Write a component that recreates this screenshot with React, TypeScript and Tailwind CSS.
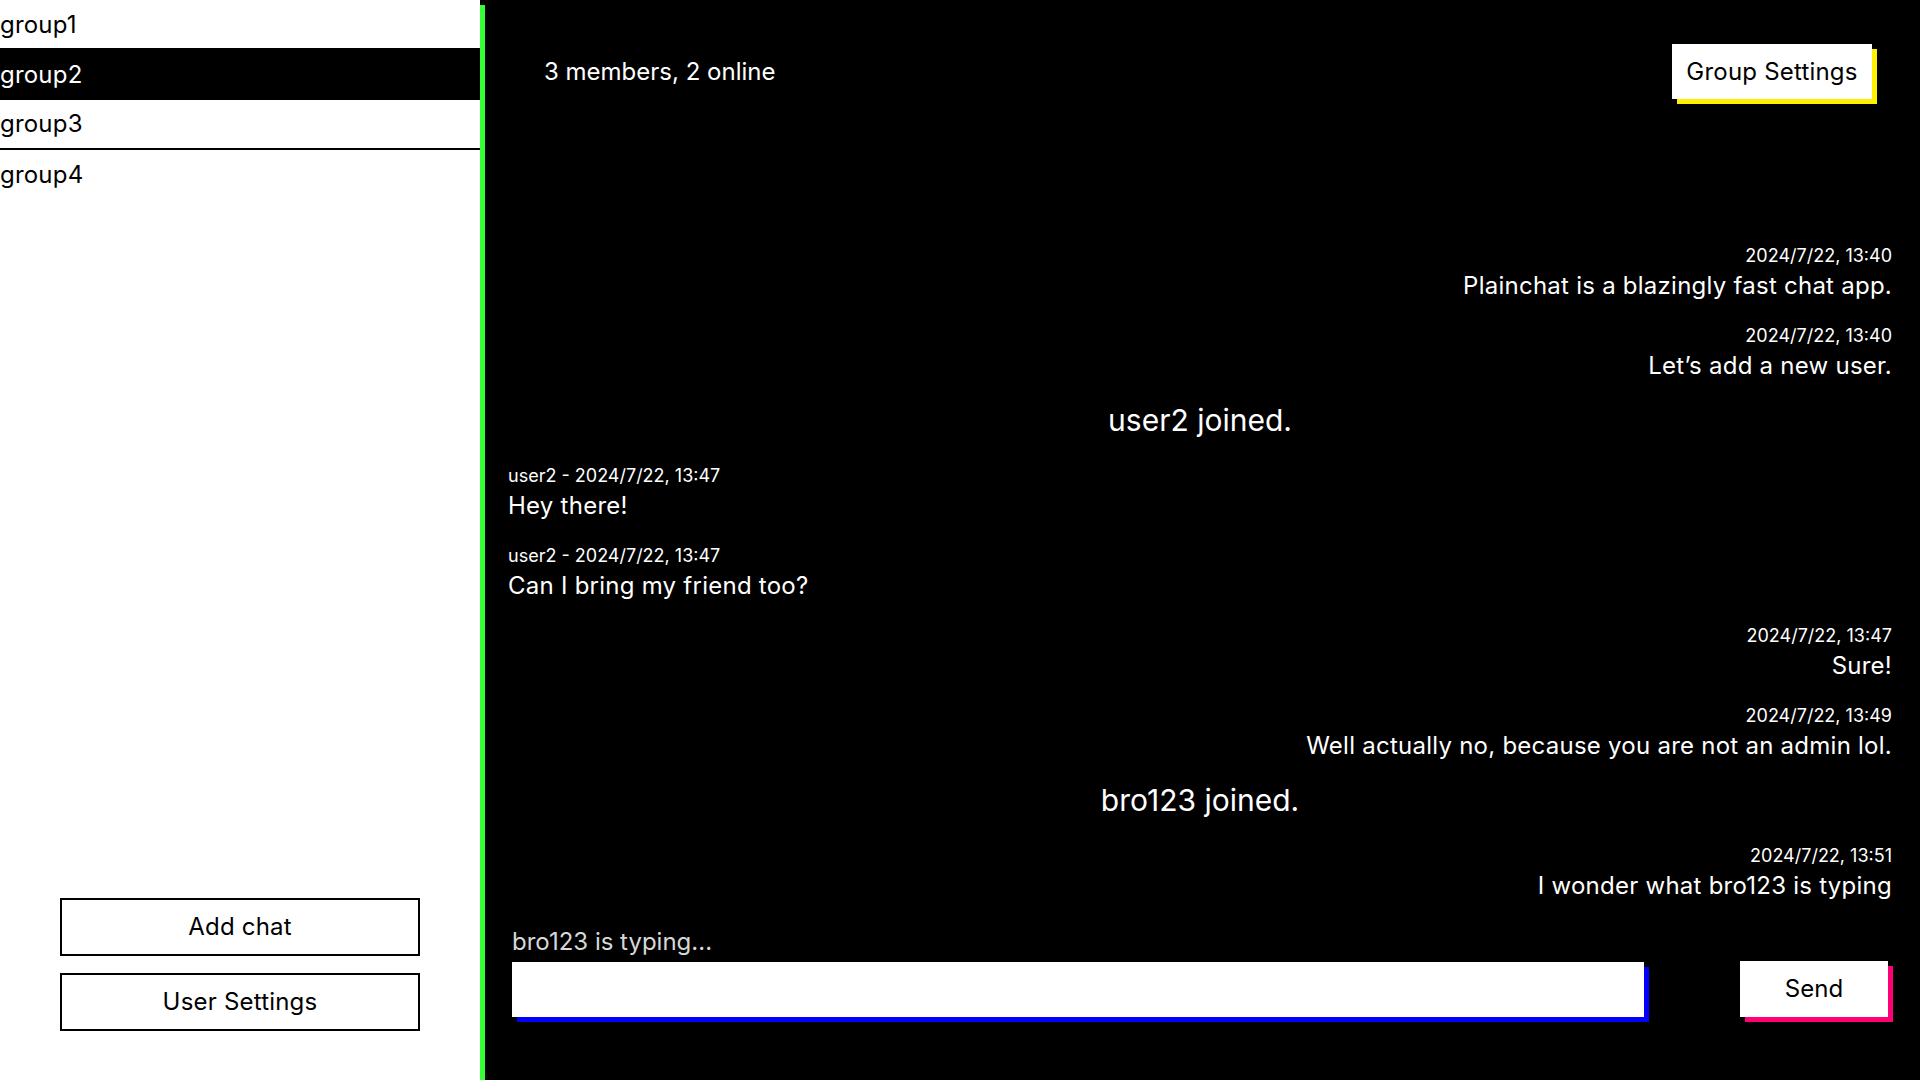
import React from "react";

const groups = ["group1", "group2", "group3", "group4"];

type Msg =
  | { kind: "mine"; time: string; text: string }
  | { kind: "theirs"; user: string; time: string; text: string }
  | { kind: "join"; text: string };

const messages: Msg[] = [
  { kind: "mine", time: "2024/7/22, 13:40", text: "Plainchat is a blazingly fast chat app." },
  { kind: "mine", time: "2024/7/22, 13:40", text: "Let’s add a new user." },
  { kind: "join", text: "user2 joined." },
  { kind: "theirs", user: "user2", time: "2024/7/22, 13:47", text: "Hey there!" },
  { kind: "theirs", user: "user2", time: "2024/7/22, 13:47", text: "Can I bring my friend too?" },
  { kind: "mine", time: "2024/7/22, 13:47", text: "Sure!" },
  { kind: "mine", time: "2024/7/22, 13:49", text: "Well actually no, because you are not an admin lol." },
  { kind: "join", text: "bro123 joined." },
  { kind: "mine", time: "2024/7/22, 13:51", text: "I wonder what bro123 is typing" },
];

const font = { fontFamily: "Inter, 'Noto Sans', sans-serif" };

const Sidebar = () => {
  return (
    <div className="relative z-10 flex w-[480px] shrink-0 flex-col justify-between bg-white text-black shadow-[5px_5px_0_#33ff33]">
      <ul>
        {groups.map((g) => (
          <li
            key={g}
            className={`flex h-[50px] items-center text-[24px] tracking-[0.2px] ${
              g === "group2" ? "-mt-[2px] h-[52px] bg-black pt-[2px] text-white" : ""
            } ${g === "group3" ? "border-b-2 border-black" : ""} ${g === "group1" ? "h-[48px]" : ""}`}
          >
            {g}
          </li>
        ))}
      </ul>
      <div className="mb-[49px] flex flex-col items-center gap-[17px]">
        <button className="h-[58px] w-[360px] border-2 border-black text-[24px] tracking-[0.2px]">Add chat</button>
        <button className="h-[58px] w-[360px] border-2 border-black text-[24px] tracking-[0.2px]">
          User Settings
        </button>
      </div>
    </div>
  );
};

const Message = ({ m }: { m: Msg }) => {
  if (m.kind === "join") {
    return <div className="mb-[26px] text-center text-[30px] leading-[34px]">{m.text}</div>;
  }
  const right = m.kind === "mine";
  return (
    <div className={`mb-[20px] flex flex-col ${right ? "items-end" : "items-start"}`}>
      <div className="text-[18px] leading-[26px]">
        {m.kind === "theirs" ? `${m.user} - ${m.time}` : m.time}
      </div>
      <div className="text-[24px] leading-[34px] tracking-[0.25px]">{m.text}</div>
    </div>
  );
};

export default function App() {
  return (
    <div className="flex h-screen w-full overflow-hidden bg-black" style={font}>
      <Sidebar />
      <div className="flex flex-1 flex-col bg-black text-white">
        <div className="flex items-center justify-between pl-[64px] pr-[48px] pt-[44px]">
          <span className="text-[24px]">3 members, 2 online</span>
          <button className="h-[55px] w-[200px] bg-white text-[24px] tracking-[0.2px] text-black shadow-[5px_5px_0_#fff000]">
            Group Settings
          </button>
        </div>
        <div className="flex flex-1 flex-col justify-end px-[28px]">
          {messages.map((m, i) => (
            <Message key={i} m={m} />
          ))}
        </div>
        <div className="px-[32px] pb-[63px]">
          <div className="text-[24px] leading-[38px] text-[#d8d8d8]">bro123 is typing...</div>
          <div className="flex items-center">
            <input className="h-[55px] flex-1 bg-white px-3 text-[24px] text-black shadow-[5px_5px_0_#0000ff] outline-none" />
            <button className="ml-[96px] h-[56px] w-[148px] bg-white text-[24px] text-black shadow-[5px_5px_0_#ff0077]">
              Send
            </button>
          </div>
        </div>
      </div>
    </div>
  );
}
